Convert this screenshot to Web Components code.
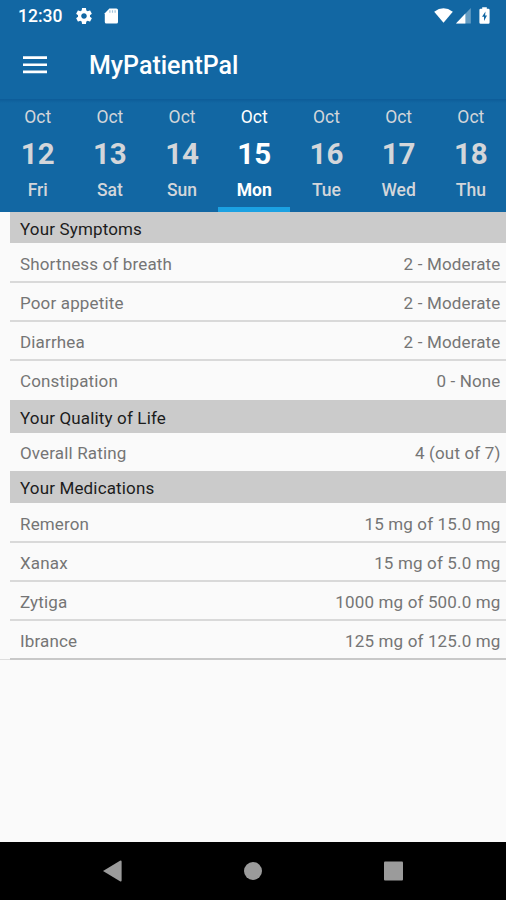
<!DOCTYPE html>
<html lang="en">
<head>
<meta charset="utf-8">
<meta name="viewport" content="width=device-width, initial-scale=1">
<title>MyPatientPal</title>
<style>
  html, body {
    margin: 0;
    height: 100%;
    overflow: hidden;
    background: #fafafa;
    font-family: Roboto, "Liberation Sans", sans-serif;
  }
</style>
</head>
<body>
<patient-app>
  <status-bar slot="top" time="12:30"></status-bar>
  <app-toolbar slot="top">MyPatientPal</app-toolbar>
  <day-strip slot="top">
    <day-item month="Oct" date="12">Fri</day-item>
    <day-item month="Oct" date="13">Sat</day-item>
    <day-item month="Oct" date="14">Sun</day-item>
    <day-item month="Oct" date="15" selected>Mon</day-item>
    <day-item month="Oct" date="16">Tue</day-item>
    <day-item month="Oct" date="17">Wed</day-item>
    <day-item month="Oct" date="18">Thu</day-item>
  </day-strip>

  <report-section heading="Your Symptoms" class="first">
    <report-row value="2 - Moderate">Shortness of breath</report-row>
    <report-row value="2 - Moderate">Poor appetite</report-row>
    <report-row value="2 - Moderate">Diarrhea</report-row>
    <report-row value="0 - None" plain>Constipation</report-row>
  </report-section>
  <report-section heading="Your Quality of Life">
    <report-row value="4 (out of 7)" plain short>Overall Rating</report-row>
  </report-section>
  <report-section heading="Your Medications">
    <report-row value="15 mg of 15.0 mg">Remeron</report-row>
    <report-row value="15 mg of 5.0 mg">Xanax</report-row>
    <report-row value="1000 mg of 500.0 mg">Zytiga</report-row>
    <report-row value="125 mg of 125.0 mg" last>Ibrance</report-row>
  </report-section>

  <nav-bar slot="bottom"></nav-bar>
</patient-app>

<script>
class PatientApp extends HTMLElement {
  constructor() {
    super();
    this.attachShadow({ mode: "open" });
    this.shadowRoot.innerHTML = `
    <style>
      :host {
        display: flex;
        flex-direction: column;
        height: 100vh;
        overflow: hidden;
        background: #fafafa;
      }
      header {
        flex: none;
        background: #1267a3;
      }
      main {
        flex: 1;
        min-height: 0;
      }
      /* Filet sous la liste, visible dans la marge gauche */
      .end {
        width: 10px;
        height: 1px;
        margin-top: -1.3px;
        background: #dedede;
      }
    </style>
    <header><slot name="top"></slot></header>
    <main>
      <slot></slot>
      <div class="end"></div>
    </main>
    <slot name="bottom"></slot>
    `;
  }
}

class StatusBar extends HTMLElement {
  connectedCallback() {
    this.attachShadow({ mode: "open" });
    this.shadowRoot.innerHTML = `
    <style>
      :host {
        display: flex;
        align-items: center;
        height: 32px;
        box-sizing: border-box;
        padding: 0 16px 0 18px;
        color: #fff;
      }
      .time {
        font-size: 17.5px;
        font-weight: 500;
        width: 58px;
      }
      svg { display: block; }
      .gear { margin-right: 12px; }
      .wifi { margin-left: auto; margin-right: 3px; }
      .signal { margin-right: 8px; }
    </style>
    <span class="time">${this.getAttribute("time")}</span>
    <svg class="gear" width="16" height="16" viewBox="2 2 20 20" fill="currentColor">
      <path d="M19.43 12.98c.04-.32.07-.64.07-.98s-.03-.66-.07-.98l2.11-1.65c.19-.15.24-.42.12-.64l-2-3.46c-.12-.22-.39-.3-.61-.22l-2.49 1c-.52-.4-1.08-.73-1.69-.98l-.38-2.65C14.46 2.18 14.25 2 14 2h-4c-.25 0-.46.18-.49.42l-.38 2.65c-.61.25-1.17.59-1.69.98l-2.49-1c-.23-.09-.49 0-.61.22l-2 3.46c-.13.22-.07.49.12.64l2.11 1.65c-.04.32-.07.65-.07.98s.03.66.07.98l-2.11 1.65c-.19.15-.24.42-.12.64l2 3.46c.12.22.39.3.61.22l2.49-1c.52.4 1.08.73 1.69.98l.38 2.65c.03.24.24.42.49.42h4c.25 0 .46-.18.49-.42l.38-2.65c.61-.25 1.17-.59 1.69-.98l2.49 1c.23.09.49 0 .61-.22l2-3.46c.12-.22.07-.49-.12-.64l-2.11-1.65zM12 15.5c-1.93 0-3.5-1.57-3.5-3.5s1.57-3.5 3.5-3.5 3.5 1.57 3.5 3.5-1.57 3.5-3.5 3.5z"/>
    </svg>
    <svg width="15" height="17" viewBox="0 0 15 17">
      <path d="M5.4 .6H12.4Q14 .6 14 2.2V14Q14 15.6 12.4 15.6H2.4Q.8 15.6 .8 14V5.2Z" fill="#fff"/>
      <path d="M5.9 2.2V4.8M8.5 2.2V4.8M11.1 2.2V4.8" stroke="#1267a3" stroke-opacity=".4" stroke-width="1.2"/>
    </svg>
    <svg class="wifi" width="19" height="16" viewBox="0 0 20 17" preserveAspectRatio="none" fill="currentColor">
      <path d="M.2 3.9Q10-3.4 19.8 3.9L10 15.6Z"/>
    </svg>
    <svg class="signal" width="15" height="16" viewBox="0 0 15 16">
      <path d="M14.8 0V15.4H0Z" fill="#fff" fill-opacity=".35"/>
      <path d="M9.4 5.6V15.4H0Z" fill="#fff"/>
    </svg>
    <svg width="11" height="18" viewBox="0 0 11 18">
      <path d="M3.2 .2H7.8V1.8H9.4Q10.6 1.8 10.6 3V15.6Q10.6 16.8 9.4 16.8H1.6Q.4 16.8 .4 15.6V3Q.4 1.8 1.6 1.8H3.2Z" fill="#fff"/>
      <path d="M6.5 4.4L3 9.8H5V14L8 8.4H6.1Z" fill="#1267a3"/>
    </svg>
    `;
  }
}

class AppToolbar extends HTMLElement {
  constructor() {
    super();
    this.attachShadow({ mode: "open" });
    this.shadowRoot.innerHTML = `
    <style>
      :host {
        display: flex;
        align-items: center;
        height: 67px;
        padding: 0 0 0 23px;
        box-sizing: border-box;
        color: #fff;
      }
      svg { display: block; margin: 0 42px 2px 0; }
      .title {
        font-size: 25px;
        font-weight: 500;
      }
    </style>
    <svg width="24" height="18" viewBox="0 0 24 18" fill="currentColor">
      <path d="M0 .2H24V2.9H0ZM0 7.4H24V10.1H0ZM0 14.6H24V17.3H0Z"/>
    </svg>
    <span class="title"><slot></slot></span>
    `;
  }
}

class DayStrip extends HTMLElement {
  constructor() {
    super();
    this.attachShadow({ mode: "open" });
    this.shadowRoot.innerHTML = `
    <style>
      :host {
        display: flex;
        height: 113px;
        box-sizing: border-box;
        padding-left: 1.6px;
        overflow: hidden;
        background: linear-gradient(#0d5c99 0, #0f609c 1.5px, #1267a3 4px);
      }
    </style>
    <slot></slot>
    `;
  }
}

class DayItem extends HTMLElement {
  connectedCallback() {
    this.attachShadow({ mode: "open" });
    this.shadowRoot.innerHTML = `
    <style>
      :host {
        display: flex;
        flex-direction: column;
        align-items: center;
        flex: 0 0 72.2px;
        box-sizing: border-box;
        height: 113px;
        padding-top: 7px;
        border-bottom: 5.5px solid transparent;
        color: #d3d6da;
      }
      :host([selected]) {
        color: #fff;
        border-bottom-color: #1ba1e2;
      }
      .month { font-size: 17.5px; line-height: 22px; }
      .date { font-size: 29.5px; line-height: 36px; font-weight: 700; margin-top: 8px; }
      .day { font-size: 17.5px; line-height: 22px; font-weight: 500; margin-top: 7px; }
      :host([selected]) .day { font-weight: 700; }
    </style>
    <span class="month">${this.getAttribute("month")}</span>
    <span class="date">${this.getAttribute("date")}</span>
    <span class="day"><slot></slot></span>
    `;
  }
}

class ReportSection extends HTMLElement {
  connectedCallback() {
    this.attachShadow({ mode: "open" });
    this.shadowRoot.innerHTML = `
    <style>
      :host {
        display: block;
        margin-left: 10px;
      }
      .heading {
        display: flex;
        align-items: flex-end;
        box-sizing: border-box;
        height: 32.7px;
        padding: 0 0 5px 10px;
        background: #cbcbcb;
        color: #1c1c1c;
        font-size: 17px;
        line-height: 20px;
        letter-spacing: .15px;
      }
      :host(.first) .heading { height: 31.3px; padding-bottom: 4.6px; }
    </style>
    <div class="heading">${this.getAttribute("heading")}</div>
    <slot></slot>
    `;
  }
}

class ReportRow extends HTMLElement {
  connectedCallback() {
    this.attachShadow({ mode: "open" });
    this.shadowRoot.innerHTML = `
    <style>
      :host {
        display: flex;
        justify-content: space-between;
        box-sizing: border-box;
        height: 39.25px;
        padding: 10.4px 5.5px 0 10px;
        border-bottom: 2px solid #d9d9d9;
        color: #757575;
        font-size: 17px;
        line-height: 20px;
        letter-spacing: .15px;
      }
      :host([plain]) { border-bottom-color: transparent; }
      :host([short]) {
        height: 37.6px;
        padding-top: 10px;
      }
      :host([last]) { border-bottom-color: #c8c8c8; }
    </style>
    <span><slot></slot></span>
    <span>${this.getAttribute("value")}</span>
    `;
  }
}

class NavBar extends HTMLElement {
  constructor() {
    super();
    this.attachShadow({ mode: "open" });
    this.shadowRoot.innerHTML = `
    <style>
      :host {
        display: flex;
        align-items: center;
        justify-content: space-between;
        flex: none;
        box-sizing: border-box;
        height: 58px;
        padding: 0 102px;
        background: #000;
        color: #9b9b9b;
      }
      svg { display: block; }
    </style>
    <svg width="20" height="22" viewBox="0 0 20 22" fill="currentColor"><path d="M1 11L18 .8Q19.6 .2 19.6 1.6V20.4Q19.6 21.8 18 21.2Z"/></svg>
    <svg width="18" height="18" viewBox="0 0 18 18" fill="currentColor"><circle cx="9" cy="9" r="9"/></svg>
    <svg width="20" height="20" viewBox="0 0 20 20" fill="currentColor"><rect x="0" y=".5" width="19" height="19" rx="1"/></svg>
    `;
  }
}

customElements.define("patient-app", PatientApp);
customElements.define("status-bar", StatusBar);
customElements.define("app-toolbar", AppToolbar);
customElements.define("day-strip", DayStrip);
customElements.define("day-item", DayItem);
customElements.define("report-section", ReportSection);
customElements.define("report-row", ReportRow);
customElements.define("nav-bar", NavBar);
</script>
</body>
</html>
